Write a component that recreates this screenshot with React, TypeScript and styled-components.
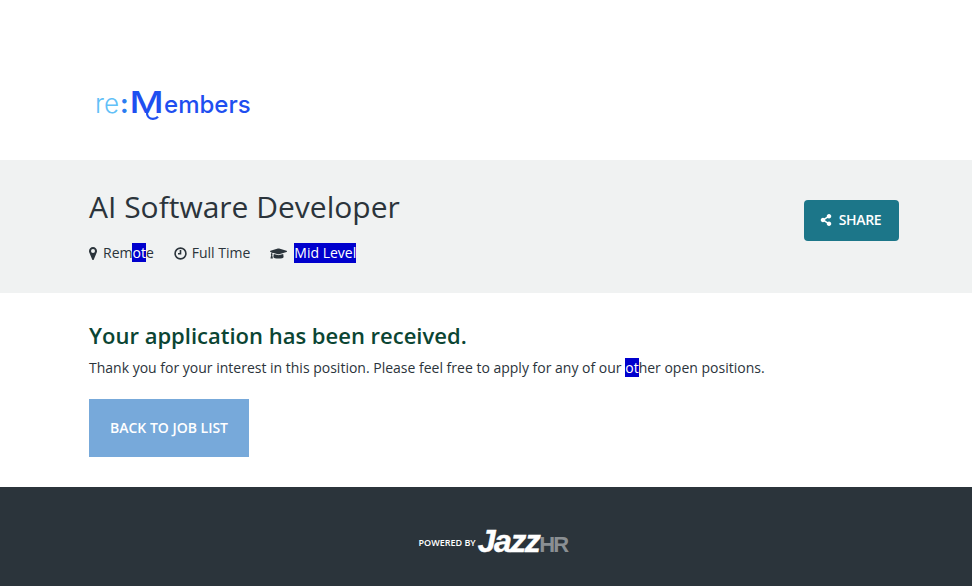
import React from "react";
import styled, { createGlobalStyle } from "styled-components";
import { FaGraduationCap, FaShareAlt } from "react-icons/fa";

const GlobalStyle = createGlobalStyle`
  html, body {
    margin: 0;
    padding: 0;
    background: #fff;
    font-family: "Open Sans", "Liberation Sans", sans-serif;
    color: #2b343b;
    overflow: hidden;
  }
`;

const MarkerIcon = () => (
  <MarkerSvg viewBox="0 0 8 13">
    <path
      fillRule="evenodd"
      d="M4 0C1.8 0 0 1.8 0 4c0 .7.1 1.2.4 1.8L3.2 12.4c.3.7 1.3.7 1.6 0L7.6 5.8C7.9 5.2 8 4.7 8 4 8 1.8 6.2 0 4 0Zm0 6a2 2 0 1 1 0-4 2 2 0 0 1 0 4Z"
    />
  </MarkerSvg>
);

const ClockIcon = () => (
  <ClockSvg viewBox="0 0 13 13">
    <circle cx="6.5" cy="6.5" r="5.4" />
    <path d="M6.5 3v3.8H4" />
  </ClockSvg>
);

const App = () => {
  return (
    <Page>
      <GlobalStyle />
      <LogoBar>
        <Logo>
          <LogoRe>re</LogoRe>
          <LogoColon>:</LogoColon>
          <LogoName>
            <LogoInitial>M</LogoInitial>embers
          </LogoName>
          <LogoTail viewBox="0 0 13 7">
            <path d="M1 0c0 3.5 2.5 5.8 6 5.8 2 0 4-.8 5-2" />
          </LogoTail>
        </Logo>
      </LogoBar>
      <JobBand>
        <JobInfo>
          <JobTitle>AI Software Developer</JobTitle>
          <MetaRow>
            <MetaItem>
              <MarkerIcon />
              <span>
                Rem<Picked>ot</Picked>e
              </span>
            </MetaItem>
            <MetaItem>
              <ClockIcon />
              <span>Full Time</span>
            </MetaItem>
            <MetaItem $wide>
              <CapIcon />
              <Picked>Mid Level</Picked>
            </MetaItem>
          </MetaRow>
        </JobInfo>
        <ShareButton>
          <FaShareAlt />
          SHARE
        </ShareButton>
      </JobBand>
      <Content>
        <Heading>Your application has been received.</Heading>
        <Message>
          Thank you for your interest in this position. Please feel free to apply for any of our{" "}
          <Picked>ot</Picked>her open positions.
        </Message>
        <BackButton>BACK TO JOB LIST</BackButton>
      </Content>
      <Footer>
        <PoweredBy>POWERED BY</PoweredBy>
        <JazzMark>
          Jazz<JazzHr>HR</JazzHr>
        </JazzMark>
      </Footer>
    </Page>
  );
};

const Page = styled.div`
  display: flex;
  flex-direction: column;
  width: 972px;
  height: 586px;
`;

const LogoBar = styled.div`
  height: 160px;
  box-sizing: border-box;
  padding: 82px 0 0 95px;
`;

const Logo = styled.div`
  position: relative;
  display: flex;
  align-items: baseline;
  width: 180px;
  white-space: nowrap;
  font-family: "Inter", sans-serif;
  font-size: 26px;
  line-height: 40px;
`;

const LogoRe = styled.span`
  color: #62c0f7;
  font-weight: 300;
`;

const LogoColon = styled.span`
  color: #2a7cf0;
  font-weight: 700;
  margin: 0 1px;
`;

const LogoName = styled.span`
  color: #1f4ff0;
  font-size: 24px;
  font-weight: 500;
`;

const LogoInitial = styled.span`
  display: inline-block;
  font-size: 30px;
  margin: 0 4px 0 3px;
  transform: scaleX(1.25);
`;

const LogoTail = styled.svg`
  position: absolute;
  left: 51px;
  top: 31px;
  width: 13px;
  height: 7px;
  fill: none;
  stroke: #1f4ff0;
  stroke-width: 2.2;
`;

const JobBand = styled.div`
  height: 133px;
  box-sizing: border-box;
  background: #f0f2f2;
  padding: 27px 73px 0 89px;
  display: flex;
  justify-content: space-between;
  align-items: flex-start;
`;

const JobInfo = styled.div`
  display: flex;
  flex-direction: column;
  gap: 16px;
`;

const JobTitle = styled.h1`
  margin: 0;
  font-size: 30px;
  line-height: 40px;
  font-weight: 400;
  color: #2b343b;
`;

const MetaRow = styled.div`
  display: flex;
  gap: 20px;
  font-size: 14px;
  line-height: 20px;
`;

const MetaItem = styled.div<{ $wide?: boolean }>`
  display: flex;
  align-items: center;
  gap: ${(p) => (p.$wide ? "7px" : "6px")};
`;

const MarkerSvg = styled.svg`
  flex: none;
  width: 8px;
  height: 13px;
  fill: #2b343b;
`;

const ClockSvg = styled.svg`
  flex: none;
  width: 13px;
  height: 13px;
  margin-right: -1px;
  fill: none;
  stroke: #2b343b;
  stroke-width: 1.6;
`;

const CapIcon = styled(FaGraduationCap)`
  flex: none;
  font-size: 17px;
  color: #2b343b;
`;

const Picked = styled.span`
  background: #0000cd;
  color: #fff;
`;

const ShareButton = styled.div`
  width: 95px;
  height: 41px;
  margin-top: 13px;
  border-radius: 4px;
  background: #1c7689;
  color: #fff;
  font-size: 14px;
  font-weight: 600;
  letter-spacing: -0.3px;
  display: flex;
  align-items: center;
  justify-content: center;
  gap: 7px;
  padding: 0 2px 2px 0;
  box-sizing: border-box;
  svg {
    font-size: 12px;
  }
`;

const Content = styled.div`
  height: 194px;
  box-sizing: border-box;
  padding: 27px 0 0 89px;
`;

const Heading = styled.h2`
  margin: 0;
  font-size: 22px;
  line-height: 30px;
  font-weight: 600;
  color: #0b4533;
`;

const Message = styled.p`
  margin: 8px 0 21px;
  font-size: 14px;
  line-height: 20px;
  color: #2b343b;
`;

const BackButton = styled.div`
  width: 160px;
  height: 58px;
  box-sizing: border-box;
  padding-bottom: 2px;
  background: #77a9da;
  color: #fff;
  font-size: 14px;
  font-weight: 600;
  display: flex;
  align-items: center;
  justify-content: center;
`;

const Footer = styled.div`
  flex: 1;
  background: #2b343b;
  display: flex;
  align-items: center;
  justify-content: center;
  gap: 2px;
  padding: 12px 0 0 14px;
`;

const PoweredBy = styled.span`
  color: #fff;
  font-size: 9px;
  font-weight: 600;
`;

const JazzMark = styled.span`
  color: #fff;
  font-family: "Liberation Sans", sans-serif;
  font-size: 32px;
  line-height: 30px;
  font-weight: 700;
  font-style: italic;
  letter-spacing: -1.5px;
  -webkit-text-stroke: 0.5px #fff;
`;

const JazzHr = styled.span`
  color: #8a8f93;
  font-size: 22px;
  font-style: normal;
  letter-spacing: -1.8px;
  -webkit-text-stroke: 0;
`;

export default App;
